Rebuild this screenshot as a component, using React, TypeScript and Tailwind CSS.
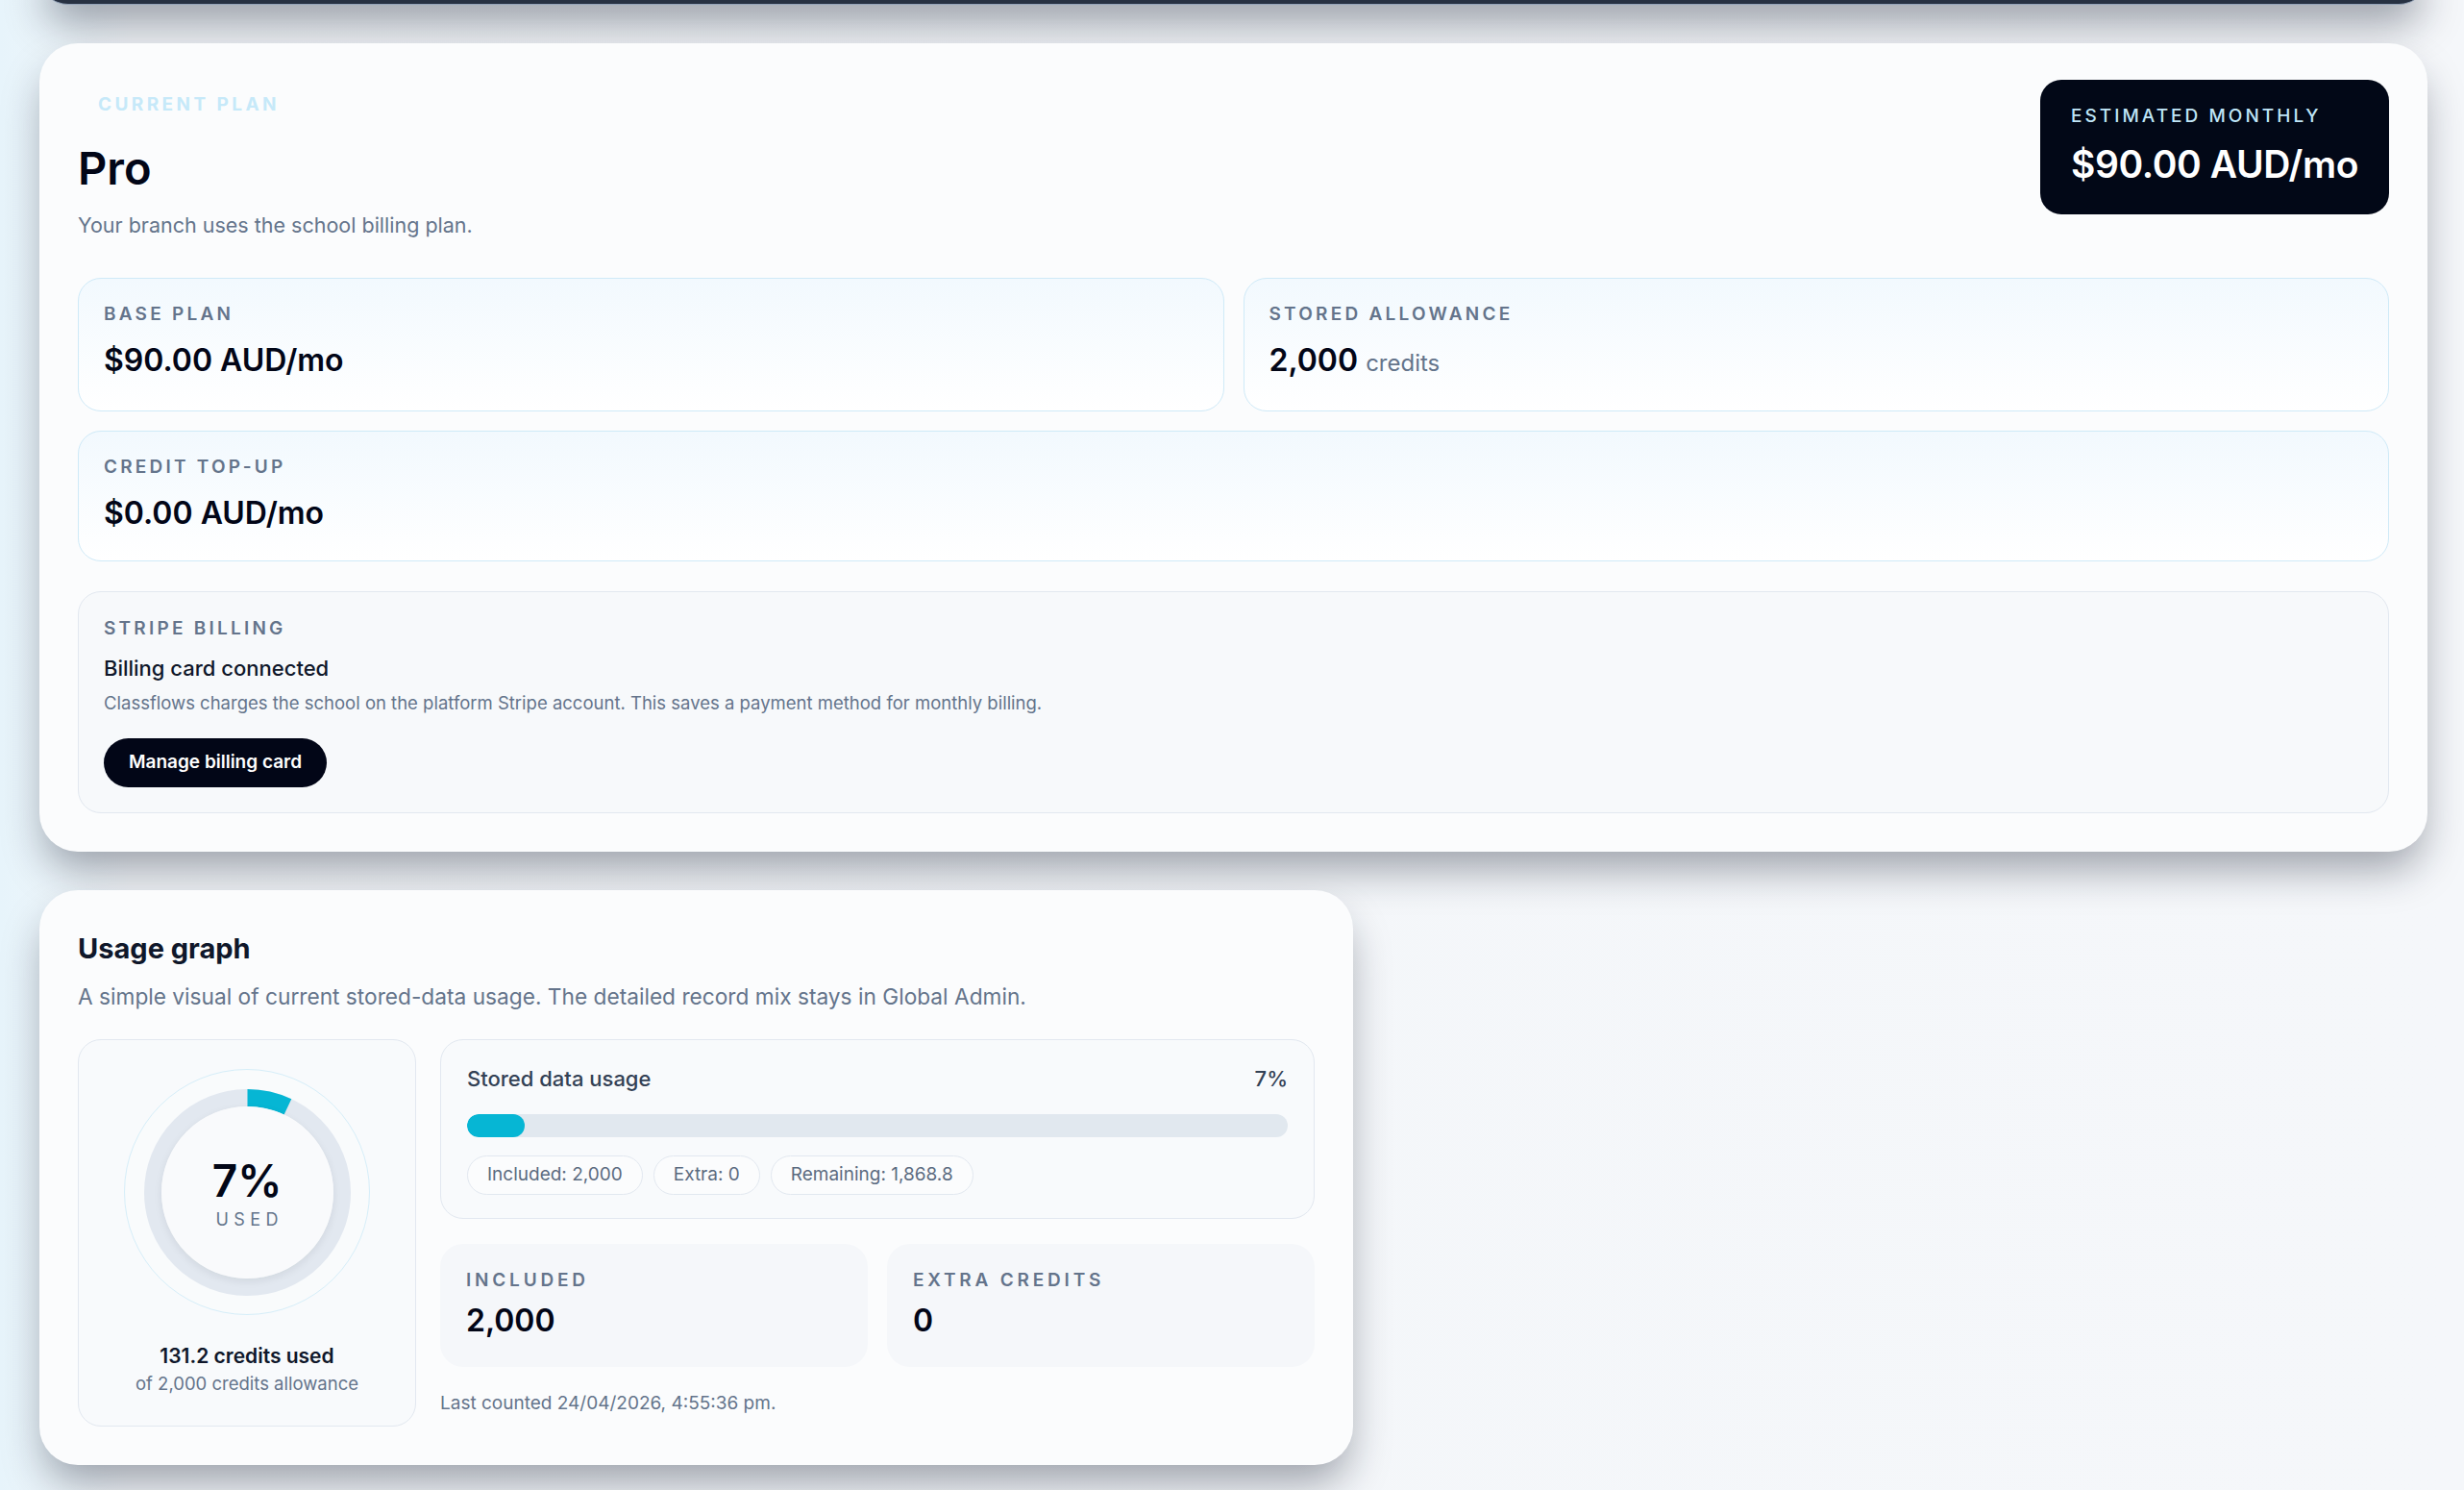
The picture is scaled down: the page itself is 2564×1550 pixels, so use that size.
import React from 'react';

const usedPercent = 7;

function TileLabel({ children }: { children: React.ReactNode }) {
  return (
    <div className="text-[19px] font-semibold uppercase leading-[28px] tracking-[0.17em] text-[#64748b]">
      {children}
    </div>
  );
}

function PlanTile({ label, children, wide }: { label: string; children: React.ReactNode; wide?: boolean }) {
  return (
    <div
      className={`rounded-[24px] border border-[#cfeaf8] bg-gradient-to-b from-[#f2f9fe] to-white px-[26px] pt-[23px] pb-[29px] ${
        wide ? 'col-span-2' : ''
      }`}
    >
      <TileLabel>{label}</TileLabel>
      <div className="mt-[14px] text-[32px] font-semibold leading-[40px] text-[#020617]">{children}</div>
    </div>
  );
}

function UsageTile({ label, value }: { label: string; value: string }) {
  return (
    <div className="rounded-[24px] bg-[#f5f7fa] px-[27px] pt-6 pb-7">
      <div className="text-[19px] font-semibold uppercase leading-[28px] tracking-[0.2em] text-[#64748b]">{label}</div>
      <div className="mt-2 text-[32px] font-semibold leading-[40px] text-[#020617]">{value}</div>
    </div>
  );
}

function Chip({ children }: { children: React.ReactNode }) {
  return (
    <span className="inline-flex h-[41px] items-center rounded-full border border-[#e2e8f0] bg-[#fbfcfd] px-5 text-[19px] text-[#5b6b80]">
      {children}
    </span>
  );
}

function UsageRing({ percent }: { percent: number }) {
  const r = 98.5;
  const c = 2 * Math.PI * r;
  return (
    <div className="flex h-[256px] w-[256px] items-center justify-center rounded-full border border-[#d6eef9] bg-[#f9fbfc]">
      <div className="relative flex h-[215px] w-[215px] items-center justify-center">
        <svg className="absolute inset-0" width="215" height="215" viewBox="0 0 215 215">
          <circle cx="107.5" cy="107.5" r={r} fill="none" stroke="#e2e8f0" strokeWidth="18" />
          <circle
            cx="107.5"
            cy="107.5"
            r={r}
            fill="none"
            stroke="#06b6d4"
            strokeWidth="18"
            strokeDasharray={`${(c * percent) / 100} ${c}`}
            transform="rotate(-90 107.5 107.5)"
          />
        </svg>
        <div className="relative flex h-[179px] w-[179px] flex-col items-center justify-center rounded-full bg-[#f9fafc] shadow-[0_3px_8px_rgba(15,23,42,0.08)]">
          <div className="mt-[4px] text-[46px] font-semibold leading-[50px] text-[#020617]">{percent}%</div>
          <div className="mt-[4px] pl-[0.3em] text-[18px] leading-[24px] tracking-[0.3em] text-[#64748b]">USED</div>
        </div>
      </div>
    </div>
  );
}

export default function App() {
  return (
    <div className="min-h-screen overflow-hidden bg-[linear-gradient(90deg,#e7f4fb_0px,#f3f6f9_140px,#f5f7fa_100%)] pl-[41px] pr-[38px] font-['Inter',sans-serif]">
      {/* previous card, only its bottom edge shows */}
      <div className="-mt-[55px] h-[60px] rounded-[40px] border-b border-[#94a3b8] bg-[#273142] shadow-[0_24px_44px_-6px_rgba(15,23,42,0.42)]" />

      {/* Current plan */}
      <section className="mt-10 rounded-[40px] bg-[#fbfcfd] p-10 shadow-[0_24px_44px_-6px_rgba(15,23,42,0.38)]">
        <div className="flex items-start justify-between">
          <div>
            <span className="inline-flex px-[21px] py-[10px] text-[19px] font-bold uppercase leading-[28px] tracking-[0.18em] text-[#c6e9f9]">
              Current plan
            </span>
            <h1 className="mt-4 text-[47px] font-semibold leading-[52px] text-[#020617]">Pro</h1>
            <p className="mt-4 text-[21.5px] leading-[34px] text-[#64748b]">Your branch uses the school billing plan.</p>
          </div>
          <div className="-mt-[2px] rounded-[22px] bg-[#020817] px-8 pt-6 pb-[30px]">
            <div className="text-[19px] font-medium uppercase leading-[28px] tracking-[0.16em] text-[#bfe5f7]">
              Estimated monthly
            </div>
            <div className="mt-[14px] text-[39px] font-semibold leading-[44px] tracking-[-0.01em] text-white">$90.00 AUD/mo</div>
          </div>
        </div>

        <div className="mt-[38px] grid grid-cols-2 gap-5">
          <PlanTile label="Base plan">$90.00 AUD/mo</PlanTile>
          <PlanTile label="Stored allowance">
            2,000 <span className="text-[24px] font-normal text-[#64748b]">credits</span>
          </PlanTile>
          <PlanTile label="Credit top-up" wide>
            $0.00 AUD/mo
          </PlanTile>
        </div>

        <div className="mt-[31px] rounded-[24px] border border-[#e2e8f0] bg-[#f7f9fb] px-[26px] pt-6 pb-[26px]">
          <TileLabel>Stripe billing</TileLabel>
          <div className="mt-[12px] text-[22px] font-medium leading-[30px] text-[#0f172a]">Billing card connected</div>
          <p className="mt-2 text-[18.5px] leading-[27px] text-[#64748b]">
            Classflows charges the school on the platform Stripe account. This saves a payment method for monthly billing.
          </p>
          <button className="mt-[23px] h-[51px] rounded-full bg-[#020617] px-[26px] text-[19px] font-semibold text-white">
            Manage billing card
          </button>
        </div>
      </section>

      {/* Usage graph */}
      <section className="mt-10 w-[1367px] rounded-[40px] bg-[#fbfcfd] px-10 pt-10 pb-10 shadow-[0_24px_44px_-6px_rgba(15,23,42,0.38)]">
        <h2 className="text-[29px] font-bold leading-[42px] text-[#0f172a]">Usage graph</h2>
        <p className="mt-3 text-[22.7px] leading-[33px] text-[#64748b]">
          A simple visual of current stored-data usage. The detailed record mix stays in Global Admin.
        </p>

        <div className="mt-7 grid grid-cols-[352px_1fr] gap-[25px]">
          <div className="flex flex-col items-center justify-center rounded-[24px] border border-[#e2e8f0] bg-[#f8fafc] py-[30px]">
            <UsageRing percent={usedPercent} />
            <div className="mt-7 text-[21px] font-semibold leading-[30px] text-[#0f172a]">131.2 credits used</div>
            <div className="text-[18.5px] leading-[27px] text-[#64748b]">of 2,000 credits allowance</div>
          </div>

          <div>
            <div className="rounded-[24px] border border-[#e2e8f0] bg-[#f8fafc] px-[27px] pt-[25px] pb-6">
              <div className="flex items-center justify-between text-[22px] font-medium leading-[30px] text-[#334155]">
                <span>Stored data usage</span>
                <span>{usedPercent}%</span>
              </div>
              <div className="mt-[22px] h-6 overflow-hidden rounded-full bg-[#e1e8ef]">
                <div className="h-full rounded-full bg-[#06b6d4]" style={{ width: `${usedPercent}%` }} />
              </div>
              <div className="mt-[19px] flex gap-[11px]">
                <Chip>Included: 2,000</Chip>
                <Chip>Extra: 0</Chip>
                <Chip>Remaining: 1,868.8</Chip>
              </div>
            </div>

            <div className="mt-[26px] grid grid-cols-2 gap-5">
              <UsageTile label="Included" value="2,000" />
              <UsageTile label="Extra credits" value="0" />
            </div>

            <p className="mt-6 text-[19px] leading-[28px] text-[#64748b]">Last counted 24/04/2026, 4:55:36 pm.</p>
          </div>
        </div>
      </section>
    </div>
  );
}
